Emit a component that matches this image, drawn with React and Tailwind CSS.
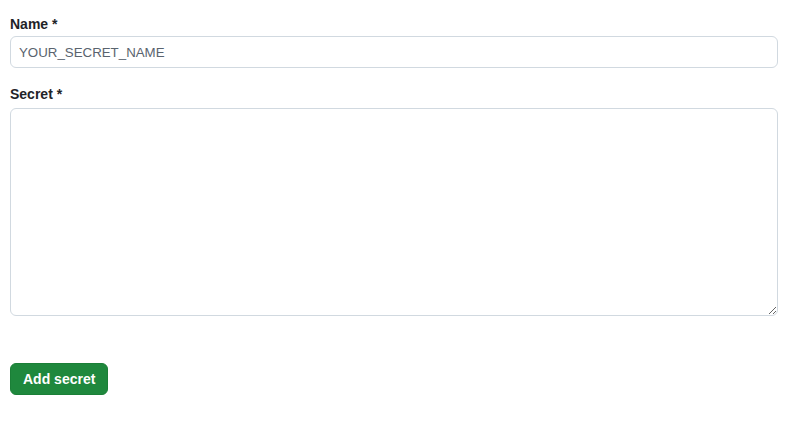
export default function App() {
  return (
    <div
      className="min-h-screen bg-white px-[10px] pt-[14px] text-[#1f2328]"
      style={{ fontFamily: '"Liberation Sans", Arial, sans-serif' }}
    >
      <form className="w-[768px]">
        <div className="mb-4">
          <label className="mb-[2px] block text-sm font-semibold leading-5">
            Name *
          </label>
          <input
            type="text"
            placeholder="YOUR_SECRET_NAME"
            className="block h-8 w-full rounded-md border border-[#d1d9e0] bg-white px-2 text-[13.3px] text-[#1f2328] placeholder:text-[#59636e] outline-none"
          />
        </div>
        <div>
          <label className="mb-1 block text-sm font-semibold leading-5">
            Secret *
          </label>
          <textarea className="block h-[208px] w-full rounded-md border border-[#d1d9e0] bg-white px-2 py-1 text-sm outline-none"></textarea>
        </div>
        <button
          type="button"
          className="mt-[47px] h-8 rounded-md border border-[#1b7f37] bg-[#1f883d] px-3 text-sm font-semibold text-white"
        >
          Add secret
        </button>
      </form>
    </div>
  );
}
